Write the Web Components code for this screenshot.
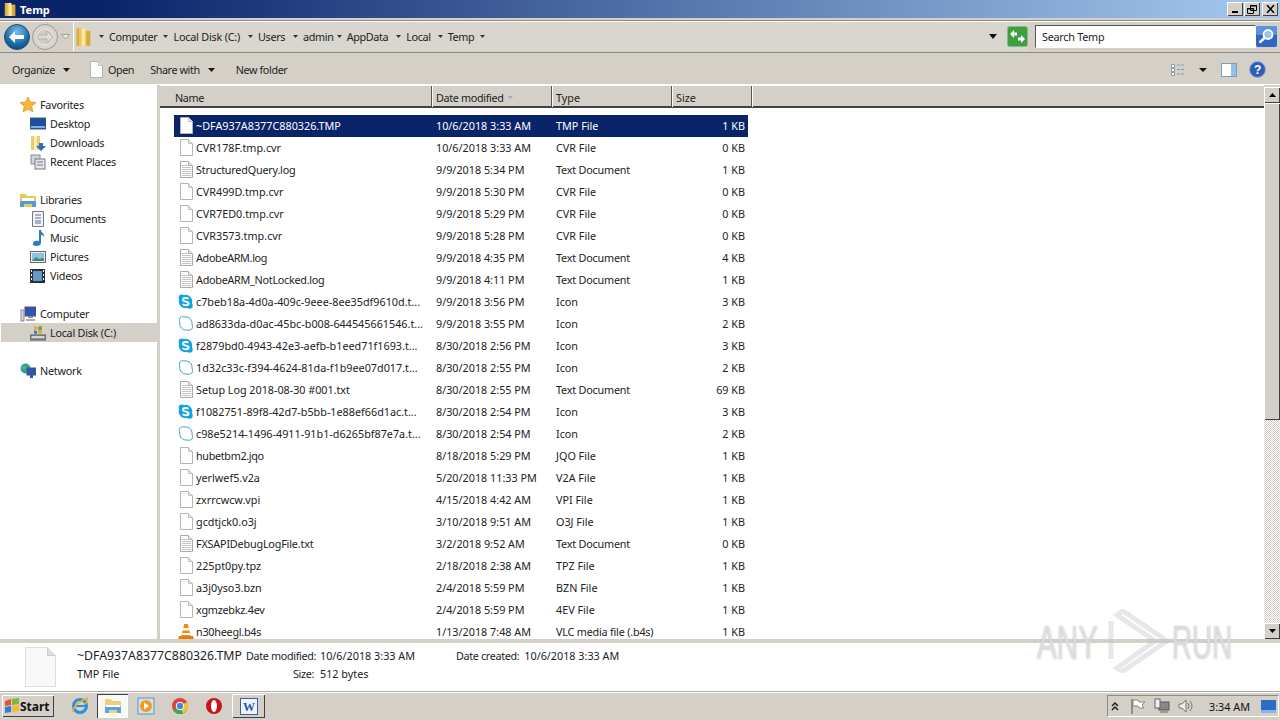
<!DOCTYPE html>
<html><head><meta charset="utf-8"><title>Temp</title>
<style>
html,body{margin:0;height:100%;overflow:hidden;background:#d4d0c8}
body{font:10.8px "Noto Sans","Liberation Sans",sans-serif;color:#1a1a1a}
</style></head><body>
<explorer-window></explorer-window>
<script>
const I={
folder:s=>`<svg width="${s}" height="${s}" viewBox="0 0 16 16"><path d="M2 1h5l1 2h5v12H2z" fill="#e8c45a"/><path d="M6 1h3v14H6z" fill="#f8eaa8"/><path d="M2 1h2v14H2z" fill="#d8b040"/><path d="M10 3h3v12h-3z" fill="#d9a93a"/></svg>`,
page:`<svg width="16" height="18" viewBox="0 0 16 18"><path d="M2.500.5h8l4 4v12h-12z" fill="#fdfdfd" stroke="#b4b4b4"/><path d="M10.500.5v4h4" fill="#e8e8e8" stroke="#c0c0c0"/></svg>`,
text:`<svg width="16" height="18" viewBox="0 0 16 18"><path d="M2.500.5h8l4 4v12h-12z" fill="#fcfcfc" stroke="#a9a9a9"/><path d="M10.500.5v4h4" fill="#e4e4e4" stroke="#b5b5b5"/><path d="M4 4.500h6M4 6.500h9M4 8.500h9M4 10.500h9M4 12.500h9M4 14.500h9" stroke="#c0c6cc"/></svg>`,
skype:`<svg width="16" height="18" viewBox="0 0 16 18"><circle cx="7.500" cy="8.500" r="6.800" fill="#11a4e4"/><circle cx="3.800" cy="4.800" r="3.200" fill="#11a4e4"/><circle cx="11.500" cy="12.500" r="3.200" fill="#11a4e4"/><path d="M10.500 5.800C9 4.500 5 4.700 5 6.800c0 2.400 5.600 1.300 5.600 3.700 0 2.200-4.300 2.300-6 .6" fill="none" stroke="#fff" stroke-width="1.900"/></svg>`,
skypeo:`<svg width="16" height="18" viewBox="0 0 16 18"><path d="M2.200 2.800C3.500 1.200 5.500 1.800 7 2c4-.5 7.500 3 7 7 .4 2 1.300 3-.2 5-1.500 1.700-3.700 1.200-5.200 1-4 .4-7.200-3-6.800-7C1.500 6.200.8 4.600 2.200 2.800z" fill="#fff" stroke="#3f9fce"/></svg>`,
vlc:`<svg width="16" height="18" viewBox="0 0 16 18"><path d="M6.300 1h3.400l3 12H3.300z" fill="#f28a10"/><path d="M5.400 5h5.200l.6 2.400H4.800zM4.300 10h7.400l.5 2H3.800z" fill="#fff"/><path d="M1 13h14l1 4H0z" fill="#e97b08"/></svg>`
};
function def(name,html,init){customElements.define(name,class extends HTMLElement{constructor(){super();this.attachShadow({mode:'open'}).innerHTML=html;}connectedCallback(){init&&init.call(this,this.shadowRoot)}})}
const ARROW=`<svg width="7" height="4" viewBox="0 0 7 4"><path d="M0 0h7L3.500 4z" fill="#1a1a1a"/></svg>`;
const SMALL=`<svg width="5" height="3" viewBox="0 0 5 3"><path d="M0 0h5L2.500 3z" fill="#333"/></svg>`;

def('title-bar',`<style>:host{display:flex;align-items:center;height:18px;background:linear-gradient(90deg,#0a246a 0,#0a246a 8%,#a6caf0 100%);color:#fff;font:bold 11px "Noto Sans","Liberation Sans",sans-serif;gap:2px;padding:0 2px 0 3px}
.t{flex:1}.b{display:flex;gap:1px}
button{width:16px;height:14px;padding:0;background:#d4d0c8;border:0;box-shadow:inset 1px 1px #fff,inset -1px -1px #404040;display:flex;align-items:center;justify-content:center}
</style>${I.folder(15)}<span class="t">Temp</span><div class="b">
<button><svg width="8" height="8"><path d="M1 6h6v2H1z" fill="#000"/></svg></button>
<button><svg width="10" height="9"><path d="M3.500.500h6v5h-6zM.500 3.500h6v5h-6z" fill="#d4d0c8" stroke="#000"/><path d="M3 1h7M0 4h7" stroke="#000"/></svg></button>
<button style="margin-left:1px"><svg width="9" height="8"><path d="M1 0l7 8M8 0L1 8" stroke="#000" stroke-width="1.500"/></svg></button></div>`);

def('address-bar',`<style>:host{display:flex;align-items:center;height:33px;margin:2px 0 1px;padding:0 3px 0 3px;border:1px solid #8d8a83;border-left:0;border-right:0;box-shadow:inset 0 1px #fff;box-sizing:border-box;background:#d4d0c8}
.nav{display:flex;align-items:center;margin-right:3px}
.path{flex:1;display:flex;align-items:center;height:29px;background:#d9d6cf;border-left:1px solid #fff;box-sizing:border-box;color:#222}
.crumb{display:flex;align-items:center;gap:5px;letter-spacing:-.35px}
.crumbs{display:flex;flex:1;margin-left:-1px}
.search{display:flex;align-items:center;width:221px;height:23px;margin-left:7px;background:#fff;box-sizing:border-box;border:1px solid #555;border-color:#555 #fff #fff #555;padding-left:6px;color:#222;letter-spacing:-.25px}
.go{width:21px;height:21px}
.tail{display:flex;align-items:center}
</style>
<div class="nav">
<svg width="28" height="28" viewBox="0 0 28 28"><defs><radialGradient id="b" cx=".5" cy=".3" r=".8"><stop offset="0" stop-color="#7cc0ea"/><stop offset=".6" stop-color="#1a6ca6"/><stop offset="1" stop-color="#0c3e72"/></radialGradient></defs><circle cx="14" cy="14" r="12.500" fill="url(#b)" stroke="#234e74"/><path d="M6 14l6-6v4h9v4h-9v4z" fill="#fff"/></svg>
<svg width="28" height="28" viewBox="0 0 28 28"><circle cx="14" cy="14" r="12.500" fill="#d8d5ce" stroke="#9a9a96"/><circle cx="14" cy="14" r="8" fill="#cfccc5" stroke="#e8e6e2"/><path d="M22 14l-6-6v4H7v4h9v4z" fill="#dedcd6" stroke="#b5b3ad"/></svg>
<svg width="9" height="6" viewBox="0 0 9 6" style="margin-left:2px"><path d="M.5.500h8L4.500 5z" fill="#e9e7e2" stroke="#a5a39d"/></svg>
</div>
<div class="path">${I.folder(20)}<div class="crumbs" id="c"></div>
<div class="tail"><svg width="8" height="5" viewBox="0 0 8 5" style="margin-right:10px"><path d="M0 0h8L4 5z" fill="#111"/></svg>
<svg width="21" height="21" viewBox="0 0 21 21"><rect x=".5" y=".5" width="20" height="20" rx="2" fill="#3e9f3e" stroke="#8aba8a"/><path d="M3 8l4-4v2.500h3v3H7V12zM18 13l-4 4v-2.500h-3v-3h3V9z" fill="#fff"/></svg></div></div>
<div class="search">Search Temp</div>
<svg class="go" viewBox="0 0 21 21"><rect width="21" height="21" rx="2" fill="#2f66c4"/><rect width="21" height="9" rx="2" fill="#5d92dd"/><circle cx="12" cy="8.500" r="4.500" fill="#9cc3ee" stroke="#fff" stroke-width="1.800"/><path d="M8.500 12l-5 4.500" stroke="#fff" stroke-width="2.500"/></svg>`,
function(r){r.getElementById('c').innerHTML=[['Computer',6],['Local Disk (C:)',6,-.2],['Users',8],['admin',8],['AppData',3],['Local',8],['Temp',7]].map(t=>`<span class="crumb" style="margin-left:${t[1]}px">${SMALL}<span style="${t[2]?'letter-spacing:'+t[2]+'px':''}">${t[0]}</span></span>`).join('')+`<span class="crumb" style="margin-left:6px">${SMALL}</span>`});

def('tool-bar',`<style>:host{display:flex;align-items:center;height:31px;background:#d4d0c8;color:#222;padding:0 14px 0 12px;box-shadow:inset 0 -1px #fff;letter-spacing:-.4px}
.i{display:flex;align-items:center}
.sp{flex:1}
</style>
<span class="i" style="gap:8px">Organize ${ARROW}</span>
<span class="i" style="gap:4px;margin-left:18px">${I.page}Open</span>
<span class="i" style="gap:8px;margin-left:16px">Share with ${ARROW}</span>
<span class="i" style="margin-left:21px">New folder</span>
<span class="sp"></span>
<svg width="16" height="13" viewBox="0 0 16 13"><path d="M1.500 1.500h3v3h-3zM1.500 5.500h3v3h-3zM1.500 9.500h3v3h-3z" fill="#fff" stroke="#8b98a8"/><path d="M7 2h8M7 6.500h8M7 11h8" stroke="#8b98a8" stroke-dasharray="3 1"/></svg>
<svg width="8" height="4" viewBox="0 0 8 4" style="margin-left:13px"><path d="M0 0h8L4 4z" fill="#111"/></svg>
<svg width="16" height="14" viewBox="0 0 16 14" style="margin-left:14px"><rect x=".5" y=".5" width="15" height="13" fill="#fff" stroke="#7d9db5"/><rect x="10" y="1" width="5" height="12" fill="#8ec2e6"/></svg>
<svg width="17" height="17" viewBox="0 0 17 17" style="margin-left:12px"><circle cx="8.500" cy="8.500" r="8" fill="#2f5fb5" stroke="#9cb0d2"/><text x="8.500" y="13" text-anchor="middle" font-size="12" font-weight="bold" fill="#fff" font-family="Liberation Sans">?</text></svg>`);

const nav=[['h','Favorites','star'],['c','Desktop','desk'],['c','Downloads','dl'],['c','Recent Places','rec'],['s'],['h','Libraries','lib'],['c','Documents','doc'],['c','Music','mus'],['c','Pictures','pic'],['c','Videos','vid'],['s'],['h','Computer','pc'],['c','Local Disk (C:)','disk',1],['s'],['h','Network','net']];
const NI={
star:`<path d="M8 0l2.300 5 5.700.6-4.200 3.800 1.200 5.600L8 12.200 3 15l1.200-5.600L0 5.600 5.700 5z" fill="#f5b73a" stroke="#d88a20" stroke-width=".6"/>`,
desk:`<rect x="0" y="2" width="16" height="11" fill="#1c4fa0" stroke="#405a80"/><path d="M1 10h14v2H1z" fill="#7fb0e4"/>`,
dl:`<path d="M1 1h9v14H1z" fill="#e9cd6b"/><path d="M4 1h3v14H4z" fill="#f8eeb8"/><path d="M9 8h4v3h3l-5 5-5-5h3z" fill="#2a6fc0"/>`,
rec:`<rect x="1" y="1" width="9" height="9" fill="#cfd4d8" stroke="#889"/><rect x="5" y="5" width="10" height="10" fill="#e3e6e8" stroke="#778"/><path d="M7 8h6M7 11h6" stroke="#778"/>`,
lib:`<path d="M0 2h6l1 2h9v11H0z" fill="#e9c860"/><path d="M2 6h12v3H2z" fill="#fff"/><path d="M0 9h16v6h-4v-3H4v3H0z" fill="#4f9cd8"/>`,
doc:`<path d="M2.500.500h11v15h-11z" fill="#f3f5f8" stroke="#778"/><path d="M5 4h6M5 7h6M5 10h6M5 12h6" stroke="#56708f"/>`,
mus:`<path d="M9 0h2c0 3 4 3 3 7-1-2-2-2-3-2v8c0 2-2 3-5 3-4 0-4-4-1-5 1-.4 3-.4 4 0z" fill="#2c7ec0"/>`,
pic:`<rect x=".5" y="2.500" width="15" height="11" fill="#e8eef2" stroke="#667"/><rect x="2" y="4" width="12" height="8" fill="#8fc0df"/><path d="M2 12l4-4 3 2 5-1v3z" fill="#3d8f68"/>`,
vid:`<rect y="1" width="15" height="14" fill="#2a3038"/><rect x="3" y="3" width="9" height="10" fill="#5e9dc8"/><path d="M1 2h1v2H1zM1 6h1v2H1zM1 10h1v2H1zM13 2h1v2h-1zM13 6h1v2h-1zM13 10h1v2h-1z" fill="#fff"/>`,
pc:`<rect x="5" y="1" width="11" height="9" fill="#2857b6" stroke="#556"/><path d="M8 10h5v2H8z" fill="#889"/><rect x="1" y="4" width="3" height="11" fill="#d8d8d0" stroke="#889"/><rect x="6" y="13" width="9" height="2" fill="#aaa"/>`,
disk:`<path d="M0 10h16v5H0z" fill="#8f9aa0" stroke="#556"/><path d="M2 11h12v2H2z" fill="#d0d4d6"/><path d="M4 1l3 .5V5L4 4.500zM8 1.700L12 1v4l-4 .5zM4 5.500l3 .5v3l-3-.5zM8 6l4-.5v3L8 9z" fill="#e8a830"/><path d="M8 1.700L12 1v4l-4 .5z" fill="#6aa84f"/><path d="M4 5.500l3 .5v3l-3-.5z" fill="#3c78d8"/>`,
net:`<circle cx="5.500" cy="5.500" r="5" fill="#2fa0a0"/><path d="M2 3h4v3H2z" fill="#5cb85c"/><rect x="7" y="5" width="9" height="7" fill="#2857b6" stroke="#556"/><path d="M10 12h3v3h-3z" fill="#2857b6"/>`};
def('nav-pane',`<style>:host{display:block;width:157px;background:#fff;padding-top:10px;box-sizing:border-box;color:#222;overflow:hidden;letter-spacing:-.25px}
.r{display:flex;align-items:center;height:19px;gap:4px}
.h{padding-left:20px}.c{padding-left:30px}
.s{height:19px}
.sel{background:#d4d0c8;height:19px;margin-left:1px;padding-left:29px}
svg{flex:none}
</style><div id="l"></div>`,function(r){r.getElementById('l').innerHTML=nav.map(n=>n[0]=='s'?'<div class="s"></div>':`<div class="r ${n[0]} ${n[3]?'sel':''}"><svg width="16" height="16" viewBox="0 0 16 16">${NI[n[2]]}</svg><span>${n[1]}</span></div>`).join('')});

def('col-head',`<style>:host{display:flex;height:23px;background:#d4d0c8;box-shadow:inset 0 1px #fff,inset 0 -2px #404040;color:#222;flex:none}
.c{box-sizing:border-box;display:flex;align-items:center;padding:1px 0 0 4px;height:21px;margin-top:1px;border-right:1px solid #555;box-shadow:1px 0 #fff;gap:5px}
.c span{letter-spacing:-.35px}
.e{flex:1}
</style><div class="c" style="width:272px;padding-left:15px"><span>Name</span></div><div class="c" style="width:120px"><span>Date modified</span> <svg width="5" height="3" viewBox="0 0 5 3"><path d="M0 0h5L2.500 3z" fill="#aaa"/></svg></div><div class="c" style="width:120px">Type</div><div class="c" style="width:80px">Size</div><div class="e"></div>`);

const files=[
['p','~DFA937A8377C880326.TMP','10/6/2018 3:33 AM','TMP File','1 KB'],
['p','CVR178F.tmp.cvr','10/6/2018 3:33 AM','CVR File','0 KB'],
['t','StructuredQuery.log','9/9/2018 5:34 PM','Text Document','1 KB',-.2],
['p','CVR499D.tmp.cvr','9/9/2018 5:30 PM','CVR File','0 KB'],
['p','CVR7ED0.tmp.cvr','9/9/2018 5:29 PM','CVR File','0 KB'],
['p','CVR3573.tmp.cvr','9/9/2018 5:28 PM','CVR File','0 KB'],
['t','AdobeARM.log','9/9/2018 4:35 PM','Text Document','4 KB',-.33],
['t','AdobeARM_NotLocked.log','9/9/2018 4:11 PM','Text Document','1 KB',-.27],
['s','c7beb18a-4d0a-409c-9eee-8ee35df9610d.t...','9/9/2018 3:56 PM','Icon','3 KB'],
['o','ad8633da-d0ac-45bc-b008-644545661546.t...','9/9/2018 3:55 PM','Icon','2 KB'],
['s','f2879bd0-4943-42e3-aefb-b1eed71f1693.t...','8/30/2018 2:56 PM','Icon','3 KB'],
['o','1d32c33c-f394-4624-81da-f1b9ee07d017.t...','8/30/2018 2:55 PM','Icon','2 KB'],
['t','Setup Log 2018-08-30 #001.txt','8/30/2018 2:55 PM','Text Document','69 KB',-.03],
['s','f1082751-89f8-42d7-b5bb-1e88ef66d1ac.t...','8/30/2018 2:54 PM','Icon','3 KB'],
['o','c98e5214-1496-4911-91b1-d6265bf87e7a.t...','8/30/2018 2:54 PM','Icon','2 KB'],
['p','hubetbm2.jqo','8/18/2018 5:29 PM','JQO File','1 KB',-.33],
['p','yerlwef5.v2a','5/20/2018 11:33 PM','V2A File','1 KB'],
['p','zxrrcwcw.vpi','4/15/2018 4:42 AM','VPI File','1 KB'],
['p','gcdtjck0.o3j','3/10/2018 9:51 AM','O3J File','1 KB'],
['t','FXSAPIDebugLogFile.txt','3/2/2018 9:52 AM','Text Document','0 KB',-.18],
['p','225pt0py.tpz','2/18/2018 2:38 AM','TPZ File','1 KB'],
['p','a3j0yso3.bzn','2/4/2018 5:59 PM','BZN File','1 KB'],
['p','xgmzebkz.4ev','2/4/2018 5:59 PM','4EV File','1 KB',-.25],
['v','n30heegl.b4s','1/13/2018 7:48 AM','VLC media file (.b4s)','1 KB',-.25]];
const FI={p:I.page,t:I.text,s:I.skype,o:I.skypeo,v:I.vlc};
def('file-list',`<style>:host{display:block;flex:1;overflow:hidden;padding:7px 0 0 14px;color:#222}
.r{display:grid;grid-template-columns:22px 240px 120px 1fr 68px;width:574px;height:22px;box-sizing:border-box;padding-bottom:2px;align-items:center;white-space:nowrap}
.r svg{display:block;margin:2px 0 0 4px}
.sel{background:#0a246a;color:#fff}
.sz{text-align:right;padding-right:3px}
.ty{letter-spacing:-.2px}
</style><div id="l"></div>`,function(r){r.getElementById('l').innerHTML=files.map((f,i)=>`<div class="r ${i==0?'sel':''}">${FI[f[0]]}<span style="letter-spacing:${f[5]||0}px">${f[1]}</span><span>${f[2]}</span><span class="${f[3].length>8?'ty':''}">${f[3]}</span><span class="sz">${f[4]}</span></div>`).join('')});

def('scroll-bar',`<style>:host{display:flex;flex-direction:column;width:16px;margin-top:2px;background:repeating-conic-gradient(#d4d0c8 0 25%,#fff 0 50%) 0 0/2px 2px;flex:none}
.b{height:16px;background:#d4d0c8;box-shadow:inset 1px 1px #fff,inset -1px -1px #404040;display:flex;align-items:center;justify-content:center;flex:none}
.th{height:317px;flex:none;background:#d4d0c8;box-shadow:inset 1px 1px #fff,inset -1px -1px #404040}
.sp{flex:1}
</style><div class="b"><svg width="7" height="4"><path d="M0 4h7L3.500 0z"/></svg></div><div class="th"></div><div class="sp"></div><div class="b"><svg width="7" height="4"><path d="M0 0h7L3.500 4z"/></svg></div>`);

def('main-area',`<style>:host{display:flex;height:554px;background:#d4d0c8;overflow:hidden}
.sp{width:3px;flex:none}
.m{flex:1;display:flex;flex-direction:column;background:#fff;min-width:0}
</style><nav-pane></nav-pane><div class="sp"></div><div class="m"><col-head></col-head><file-list></file-list></div><scroll-bar></scroll-bar>`);

def('details-pane',`<style>:host{display:flex;height:53px;box-sizing:border-box;background:#fff;border-top:4px solid #d4d0c8;border-bottom:1px solid #aaa;color:#222;overflow:hidden}
.ic{margin:4px 0 0 25px;flex:none}
.g{display:grid;grid-template-columns:169px 68px 142px auto;grid-auto-rows:18px;margin:3px 0 0 21px;white-space:nowrap;align-items:center}
.n{font-size:12.300px}
.l{text-align:right;letter-spacing:-.35px}
.v{padding-left:6px}
.cr b{font-weight:normal;margin-right:5px;letter-spacing:-.35px}
</style><svg class="ic" width="31" height="40" viewBox="0 0 31 40"><path d="M.500.500h22l8 8v31h-30z" fill="#f8f8f8" stroke="#ddd"/><path d="M22.500.500v8h8" fill="#ddd" stroke="#ccc"/></svg>
<div class="g"><span class="n">~DFA937A8377C880326.TMP</span><span class="l">Date modified:</span><span class="v">10/6/2018 3:33 AM</span><span class="cr"><b>Date created:</b>10/6/2018 3:33 AM</span>
<span>TMP File</span><span class="l">Size:</span><span class="v">512 bytes</span></div>`);

def('task-bar',`<style>:host{display:flex;align-items:center;height:28px;background:#d4d0c8;box-shadow:inset 0 1px #fff;color:#111}
.st{display:flex;align-items:center;width:52px;height:22px;margin-left:2px;box-sizing:border-box;padding-left:2px;font:bold 12px "Noto Sans","Liberation Sans",sans-serif;box-shadow:inset 1px 1px #fff,inset -1px -1px #404040}
.apps{display:flex;align-items:center;flex:1;margin-left:10px}
.a{width:32px;height:24px;display:flex;align-items:center;justify-content:center;margin-right:2px}
.on{background:repeating-conic-gradient(#fff 0 25%,#f4f2ee 0 50%) 0 0/2px 2px;box-shadow:inset 1px 1px #404040,inset -1px -1px #fff}
.up{box-shadow:inset 1px 1px #fff,inset -1px -1px #404040}
.tray{display:flex;align-items:center;height:22px;width:172px;box-sizing:border-box;margin-right:1px;border:1px solid #8d8a83;border-right-color:#fff;border-bottom-color:#fff;padding-left:3px}
.tm{margin-left:15px;margin-right:11px;white-space:nowrap;width:41px}
</style>
<div class="st"><svg width="16" height="16" viewBox="0 0 16 16"><path d="M1 3l6-2v6l-6 1z" fill="#e5532d"/><path d="M8 1l7-1v6l-7 1z" fill="#7cb83a"/><path d="M1 9l6-1v6l-6 1z" fill="#2c7fd6"/><path d="M8 8l7-1v6l-7 1z" fill="#f3bc2e"/></svg>Start</div>
<div class="apps">
<div class="a" style="margin-right:1px"><svg width="18" height="18" viewBox="0 0 18 18"><circle cx="9" cy="9" r="6.500" fill="none" stroke="#2d8fdc" stroke-width="3"/><path d="M4 9h11" stroke="#2d8fdc" stroke-width="2"/><path d="M1 15C3 9 9 4 16 1c1 2-1 5-3 7" fill="none" stroke="#e8b52e" stroke-width="1.500"/></svg></div>
<div class="a on" style="width:31px"><svg width="18" height="16" viewBox="0 0 18 16"><path d="M1 1h6l1 2h9v12H1z" fill="#e9d07a"/><path d="M2 7h14v2H2z" fill="#fff"/><path d="M1 9h16v6h-4v-3H5v3H1z" fill="#59a5de"/></svg></div>
<div class="a"><svg width="18" height="18" viewBox="0 0 18 18"><rect x="1" y="1" width="16" height="16" fill="#cfe2f2" stroke="#5f93bf"/><circle cx="9" cy="9" r="6" fill="#f39a1e"/><path d="M7 5.500l5 3.500-5 3.500z" fill="#fff"/></svg></div>
<div class="a"><svg width="18" height="18" viewBox="0 0 18 18"><circle cx="9" cy="9" r="8" fill="#d8453a"/><path d="M9 9L2.100 13A8 8 0 0 0 15.900 13z" fill="#3ea64f"/><path d="M9 9l7-4A8 8 0 0 1 12 16.400z" fill="#f3c52f"/><circle cx="9" cy="9" r="3.800" fill="#3d82e0" stroke="#fff"/></svg></div>
<div class="a"><svg width="18" height="18" viewBox="0 0 18 18"><circle cx="9" cy="9" r="8" fill="#c9141c"/><ellipse cx="9" cy="9" rx="3" ry="6" fill="#fff"/></svg></div>
<div class="a up" style="width:33px"><svg width="18" height="17" viewBox="0 0 18 17"><rect x=".5" y=".5" width="17" height="16" fill="#eef3fa" stroke="#3a5f9f"/><text x="9" y="13" text-anchor="middle" font-size="12" font-weight="bold" fill="#1d57a8" font-family="Liberation Serif">W</text></svg></div>
</div>
<div class="tray"><svg width="8" height="9" viewBox="0 0 8 9"><path d="M1 4l3-3 3 3M1 8l3-3 3 3" fill="none" stroke="#222" stroke-width="1.500"/></svg>
<svg width="16" height="17" viewBox="0 0 16 17" style="margin-left:11px"><path d="M2 1v15" stroke="#777" stroke-width="1.500"/><path d="M3 2h5l1 2h6l-3 3 2 3H9L8 8H3z" fill="#fff" stroke="#888"/></svg>
<svg width="16" height="16" viewBox="0 0 16 16" style="margin-left:8px"><rect x="5" y="4" width="10" height="8" fill="#888" stroke="#555"/><rect x="1" y="1" width="5" height="9" fill="#eee" stroke="#666"/><path d="M6 14h8" stroke="#666"/></svg>
<svg width="16" height="16" viewBox="0 0 16 16" style="margin-left:8px"><path d="M1 6h3l4-4v12l-4-4H1z" fill="#eee" stroke="#777"/><path d="M10 5q2 3 0 6M12 3q4 5 0 10" fill="none" stroke="#778"/></svg>
<span class="tm">3:34 AM</span>
<svg width="15" height="13" viewBox="0 0 15 13"><rect width="15" height="13" fill="#2c6cc4"/><rect y="10" width="15" height="3" fill="#86b6e6"/></svg></div>`);

def('any-run',`<style>:host{position:absolute;left:1037px;top:608px;width:200px;height:75px;pointer-events:none;color:rgba(255,255,255,.55);font:48px/1 "Liberation Sans",sans-serif;text-shadow:0 0 2px #b0b0b0}
span{position:absolute;top:11px;transform-origin:0 0;transform:scaleX(.62)}
.a{left:0}
.b{left:135px;transform:scaleX(.58)}
svg{position:absolute;left:68px;top:1px;opacity:.4}
</style><span class="a">ANY</span><svg width="70" height="64" viewBox="0 0 70 64"><path d="M6 12v38M12 6l6-4 44 30-44 30-6-3 38-27z" fill="none" stroke="#c4c4c4" stroke-width="5"/></svg><span class="b">RUN</span>`);

def('explorer-window',`<style>:host{display:flex;flex-direction:column;height:720px;position:relative;overflow:hidden}
</style><title-bar></title-bar><address-bar></address-bar><tool-bar></tool-bar><main-area></main-area><details-pane></details-pane><task-bar></task-bar><any-run></any-run>`);
</script></body></html>
